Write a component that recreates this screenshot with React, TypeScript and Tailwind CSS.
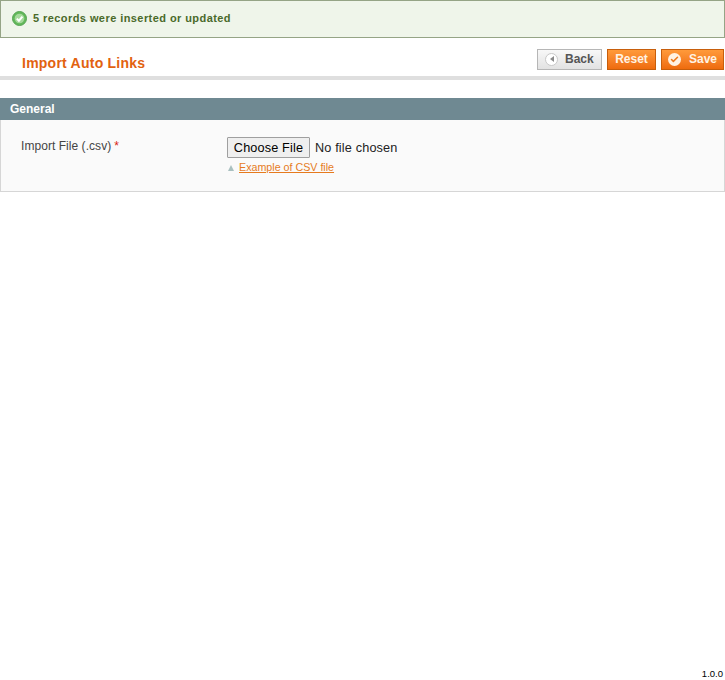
import { Check } from 'lucide-react'

function SuccessIcon() {
  return (
    <svg width="15" height="15" viewBox="0 0 15 15" className="shrink-0">
      <circle cx="7.5" cy="7.5" r="7" fill="#62b85a" stroke="#57a553" strokeWidth="1" />
      <circle cx="7.5" cy="7.5" r="4.8" fill="#a5d99b" />
      <path d="M4.8 7.6 L6.9 9.7 L10.4 5.6" fill="none" stroke="#ffffff" strokeWidth="2" />
    </svg>
  )
}

function ActionButton({ label, icon, className }: { label: string; icon?: React.ReactNode; className: string }) {
  return (
    <button className={`flex h-[21px] items-center border pb-[1px] text-[12px] font-bold ${className}`}>
      {icon}
      {label}
    </button>
  )
}

export default function App() {
  return (
    <div className="flex min-h-[680px] flex-col bg-white font-['Liberation_Sans',Arial,sans-serif] text-[12px] text-[#2f2f2f]">
      <div className="flex h-[38px] items-center gap-[6px] border border-[#95a486] bg-[#eff5ea] pb-[2px] pl-[11px] text-[11px] font-bold text-[#4a6a2a]">
        <SuccessIcon />
        <span className="tracking-[0.43px]">5 records were inserted or updated</span>
      </div>

      <div className="flex h-[42px] items-start justify-between border-b-[4px] border-[#dfdfdf] bg-white pl-[22px]">
        <h3 className="mt-[15px] text-[14px] leading-[20px] font-bold tracking-[0.24px] text-[#e2620f]">Import Auto Links</h3>
        <div className="mt-[11px] flex gap-[5px] pr-[1px]">
          <ActionButton
            label="Back"
            className="w-[65px] justify-start gap-[7px] border-[#b6b6b6] bg-gradient-to-b from-[#f8f8f8] to-[#e2e2e2] pl-[7px] text-[#555]"
            icon={
              <span className="flex h-[13px] w-[13px] items-center justify-center rounded-full border border-[#c8c8c8] bg-white">
                <span className="h-0 w-0 border-y-[3px] border-r-[4px] border-y-transparent border-r-[#8a8a8a]" />
              </span>
            }
          />
          <ActionButton
            label="Reset"
            className="w-[49px] justify-center border-[#c75e0c] bg-gradient-to-b from-[#ff9a3a] to-[#ee6b0c] text-[#fff3e4]"
          />
          <ActionButton
            label="Save"
            className="w-[63px] justify-start gap-[8px] border-[#c75e0c] bg-gradient-to-b from-[#ff9a3a] to-[#ee6b0c] pl-[6px] text-[#fff3e4]"
            icon={
              <span className="flex h-[13px] w-[13px] items-center justify-center rounded-full bg-[#fff3e4]">
                <Check size={9} strokeWidth={4} className="text-[#ee7a1c]" />
              </span>
            }
          />
        </div>
      </div>

      <div className="mt-[18px] flex h-[22px] items-center bg-[#6f8992] pl-[10px] text-[12px] font-bold text-white">
        General
      </div>
      <div className="flex h-[72px] border border-t-0 border-[#d6d6d6] bg-[#fafafa] pt-[19px] pl-[20px]">
        <label className="w-[206px] text-[12px] leading-[14px] tracking-[0.05px] text-[#444]">
          Import File (.csv)<span className="ml-[3px] text-[#d9230f]">*</span>
        </label>
        <div className="-mt-[2px] flex flex-col">
          <div className="flex items-center text-[12.7px] leading-[14px] tracking-[0.15px] text-[#222]">
            <span className="flex h-[21px] w-[83px] items-center justify-center rounded-[1px] border border-[#9f9f9f] bg-[#efefef] text-black">
              Choose File
            </span>
            <span className="ml-[5px]">No file chosen</span>
          </div>
          <div className="mt-[3px] flex items-center text-[10.7px] leading-[13px]">
            <span className="mr-[5px] ml-[1px] h-0 w-0 border-x-[3.5px] border-b-[6px] border-x-transparent border-b-[#a9c0c0]" />
            <a className="text-[#e67a1e] underline">Example of CSV file</a>
          </div>
        </div>
      </div>

      <div className="mt-auto pr-[2px] text-right text-[9.5px] leading-[12px] text-black">1.0.0</div>
    </div>
  )
}
